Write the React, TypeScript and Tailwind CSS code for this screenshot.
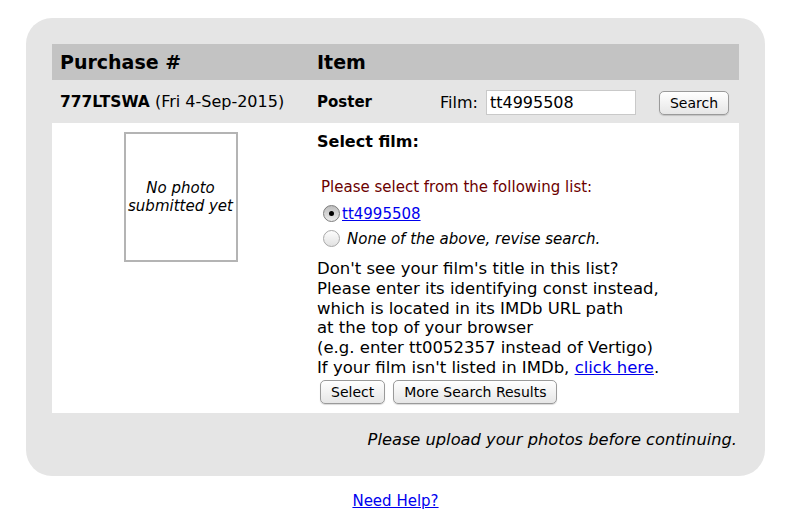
// Purchase / film selection panel

const btn =
  "h-[24px] rounded-[5px] border border-[#9a9a9a] bg-gradient-to-b from-white to-[#e6e6e6] px-[10px] text-[14px] leading-[22px] text-black shadow-[0_1px_1px_rgba(0,0,0,0.15)]";

function Radio({ checked }: { checked?: boolean }) {
  return (
    <span
      className={
        checked
          ? "flex h-[17px] w-[17px] shrink-0 items-center justify-center rounded-full border border-[#7d7d7d] bg-gradient-to-b from-[#bdbdbd] to-[#ececec]"
          : "flex h-[17px] w-[17px] shrink-0 items-center justify-center rounded-full border border-[#a8a8a8] bg-gradient-to-b from-[#fdfdfd] to-[#e2e2e2]"
      }
    >
      {checked && <span className="h-[5px] w-[5px] rounded-full bg-black" />}
    </span>
  );
}

export default function App() {
  return (
    <div className="min-h-[532px] bg-white pt-[18px] font-['Verdana','DejaVu_Sans',sans-serif] text-black">
      <div className="ml-[26px] w-[739px] rounded-[26px] bg-[#e5e5e5] px-[26px] pt-[26px] pb-[26px]">
        {/* Header */}
        <div className="grid h-[36px] grid-cols-[257px_1fr] items-center bg-[#c3c3c3] text-[19px] font-bold">
          <div className="pl-2">Purchase #</div>
          <div className="pl-2">Item</div>
        </div>

        {/* Purchase row */}
        <div className="grid h-[43px] grid-cols-[257px_1fr] items-center pt-[2px] text-[16px]">
          <div className="pl-2">
            <span className="text-[15.5px] font-bold">777LTSWA</span> (Fri 4-Sep-2015)
          </div>
          <div className="flex items-center pl-2">
            <span className="w-[123px] text-[15px] font-bold">Poster</span>
            <span>Film:</span>
            <input
              readOnly
              value="tt4995508"
              className="ml-[8px] h-[25px] w-[150px] border border-[#c9c9c9] bg-white px-[3px] text-[16px] outline-none"
            />
            <button className={btn + " ml-[23px]"}>Search</button>
          </div>
        </div>

        {/* Selection area */}
        <div className="grid grid-cols-[257px_1fr] bg-white text-[16px] leading-[20px]">
          <div className="flex justify-center pt-[9px]">
            <div className="flex h-[130px] w-[114px] items-center justify-center whitespace-nowrap border-2 border-[#b4b4b4] text-center text-[15px] italic leading-[18px]">
              No photo
              <br />
              submitted yet
            </div>
          </div>
          <div className="pl-2 pt-[9px] pb-[9px]">
            <div className="font-bold">Select film:</div>
            <div className="mt-[25px] pl-[4px] text-[15px] text-[#6b0000]">Please select from the following list:</div>
            <div className="mt-[4px] flex h-[25px] items-center pl-[6px] text-[15px]">
              <Radio checked />
              <a href="#" className="ml-[2px] text-[#0000ee] underline">
                tt4995508
              </a>
            </div>
            <div className="flex h-[25px] items-center pl-[6px] text-[15px]">
              <Radio />
              <span className="ml-[7px] italic">None of the above, revise search.</span>
            </div>
            <div className="mt-[8px] text-[16.5px] leading-[19.8px]">
              Don't see your film's title in this list?
              <br />
              Please enter its identifying const instead,
              <br />
              which is located in its IMDb URL path
              <br />
              at the top of your browser
              <br />
              (e.g. enter tt0052357 instead of Vertigo)
              <br />
              If your film isn't listed in IMDb,{" "}
              <a href="#" className="text-[#0000ee] underline">
                click here
              </a>
              .
            </div>
            <div className="mt-[2px] flex gap-[8px] pl-[3px]">
              <button className={btn}>Select</button>
              <button className={btn}>More Search Results</button>
            </div>
          </div>
        </div>

        {/* Footer */}
        <div className="pt-[17px] pr-[2px] text-right text-[16.25px] italic leading-[20px]">
          Please upload your photos before continuing.
        </div>
      </div>

      <div className="mt-[14px] w-[791px] text-center text-[15px]">
        <a href="#" className="text-[#0000ee] underline">
          Need Help?
        </a>
      </div>
    </div>
  );
}
